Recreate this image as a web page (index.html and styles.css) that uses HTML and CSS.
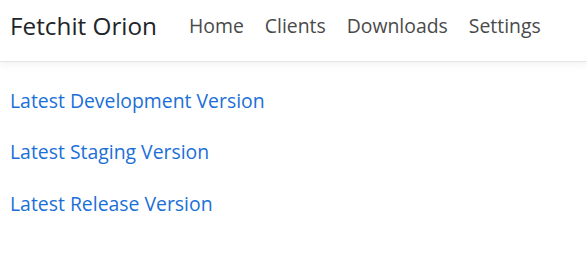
FILE: index.html
```html
<!DOCTYPE html>
<html lang="en">
<head>
    <meta charset="UTF-8">
    <meta name="viewport" content="width=device-width, initial-scale=1.0">
    <title>Fetchit Orion</title>
    <link rel="stylesheet" href="styles.css">
</head>
<body>
    <nav class="navbar">
        <a class="brand" href="#">Fetchit Orion</a>
        <ul class="nav-links">
            <li><a href="#">Home</a></li>
            <li><a href="#">Clients</a></li>
            <li><a href="#">Downloads</a></li>
            <li><a href="#">Settings</a></li>
        </ul>
    </nav>

    <main class="content">
        <a class="version-link" href="#">Latest Development Version</a>
        <a class="version-link" href="#">Latest Staging Version</a>
        <a class="version-link" href="#">Latest Release Version</a>
    </main>
</body>
</html>
```

FILE: styles.css
```css
body {
    margin: 0;
    background: #fff;
    font-family: "Open Sans", "Noto Sans", sans-serif;
    color: #212529;
}
a {
    text-decoration: none;
}
.navbar {
    display: flex;
    align-items: center;
    height: 51px;
    padding: 0 10px 10px;
    border-bottom: 1px solid #e5e5e5;
    box-shadow: 0 3px 8px rgba(0,0,0,0.05);
}
.brand {
    font-size: 24.3px;
    color: #212529;
    margin-right: 21.5px;
}
.nav-links {
    display: flex;
    list-style: none;
    margin: 0;
    padding: 0;
}
.nav-links a {
    display: block;
    padding: 0 10.5px;
    font-size: 19.4px;
    color: #4a4a4a;
}
.content {
    display: flex;
    flex-direction: column;
    align-items: flex-start;
    gap: 24.6px;
    padding: 24.8px 10px;
}
.version-link {
    font-size: 19.4px;
    color: #1b6fd8;
}
```
